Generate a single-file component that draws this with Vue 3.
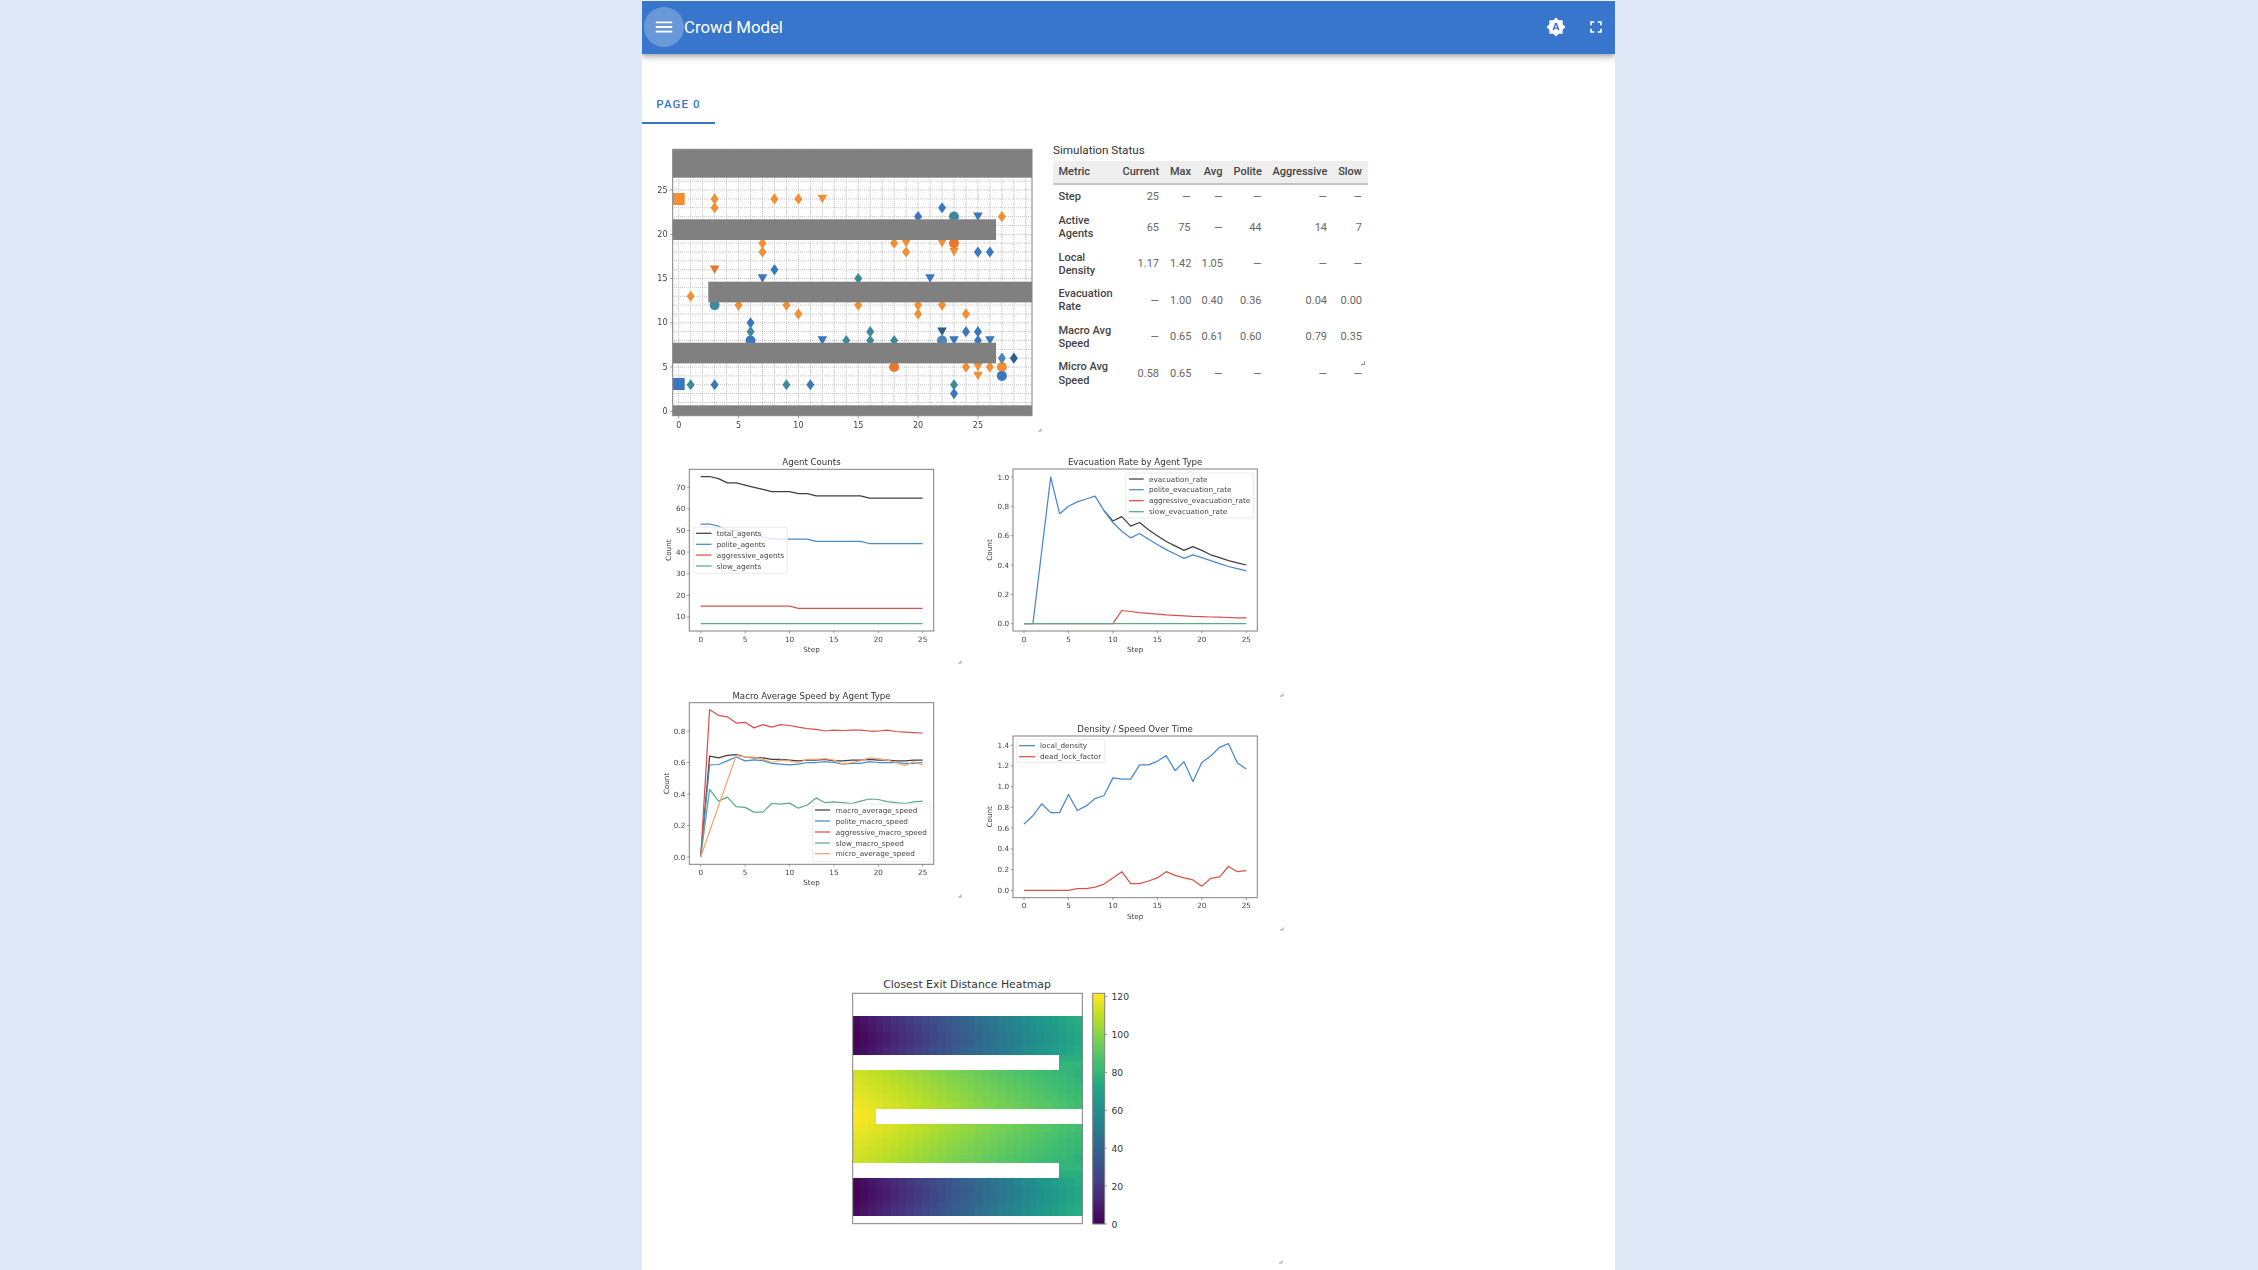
<script setup>
const K = '#404040', B = '#4a88cc', R = '#d8524a', G = '#5cab87', O = '#f4a571'

function line(c, ys, color, xs) {
  const pts = ys.map((y, i) => `${(c.x0 + c.dx * (xs ? xs[i] : i)).toFixed(1)},${(c.y0 - c.dy * y).toFixed(1)}`)
  return { d: 'M' + pts.join('L'), color }
}

function makeChart(c) {
  const xt = [0, 5, 10, 15, 20, 25].map(v => ({ v, x: c.x0 + c.dx * v }))
  const yt = c.yticks.map(v => ({ label: c.dec ? v.toFixed(1) : String(v), y: c.y0 - c.dy * v }))
  const lines = c.series.map(s => line(c, s.y, s.color, s.x))
  const leg = c.legend
  const rows = leg.rows.map((r, i) => ({ ...r, y: leg.ys[i] }))
  return { ...c, xt, yt, lines, rows, viewBox: c.vb.join(' '), w: c.vb[2], h: c.vb[3], cx: (c.l + c.r) / 2, cy: (c.t + c.b) / 2 }
}

const a = makeChart({
  key: 'a', vb: [650, 450, 316, 216], title: 'Agent Counts', titleY: 462,
  l: 689.3, r: 933.7, t: 469.3, b: 631, x0: 700.7, dx: 8.88, y0: 638.6, dy: 2.162,
  yticks: [10, 20, 30, 40, 50, 60, 70], yLabelX: 668.3, handle: [960, 663],
  series: [
    { color: K, y: [75,75,74,72,72,71,70,69,68,68,68,67,67,66,66,66,66,66,66,65,65,65,65,65,65,65] },
    { color: B, y: [53,53,52,50,50,49,48,47,46,46,46,46,46,45,45,45,45,45,45,44,44,44,44,44,44,44] },
    { color: R, y: [15,15,15,15,15,15,15,15,15,15,15,14,14,14,14,14,14,14,14,14,14,14,14,14,14,14] },
    { color: G, y: Array(26).fill(7) },
  ],
  legend: { x: 693.7, y: 527.3, w: 93.6, h: 46, lx: 696, lw: 15.5, tx: 716.7, ys: [533.3, 544.3, 555, 566],
    rows: [{ t: 'total_agents', c: K }, { t: 'polite_agents', c: B }, { t: 'aggressive_agents', c: R }, { t: 'slow_agents', c: G }] },
})

const c = makeChart({
  key: 'c', vb: [650, 680, 316, 220], title: 'Macro Average Speed by Agent Type', titleY: 695.7,
  l: 689.3, r: 933.7, t: 702.7, b: 864.3, x0: 700.7, dx: 8.88, y0: 857, dy: 157.5,
  yticks: [0, .2, .4, .6, .8], dec: true, yLabelX: 666, handle: [960, 897],
  series: [
    { color: K, y: [0,.64,.63,.645,.65,.635,.63,.63,.62,.62,.615,.61,.615,.615,.62,.61,.61,.615,.615,.62,.615,.615,.61,.61,.615,.615] },
    { color: B, y: [0,.585,.587,.61,.635,.61,.617,.612,.595,.59,.585,.59,.6,.6,.605,.6,.59,.595,.595,.605,.6,.6,.6,.595,.595,.6] },
    { color: R, y: [0,.935,.9,.89,.85,.855,.82,.84,.825,.84,.835,.825,.815,.81,.8,.805,.803,.805,.805,.8,.8,.805,.797,.793,.79,.787] },
    { color: G, y: [0,.43,.355,.38,.32,.315,.285,.285,.34,.335,.342,.31,.33,.375,.345,.35,.345,.34,.355,.368,.365,.352,.345,.34,.35,.355] },
    { color: O, x: [0,4,5,6,7,8,9,10,11,12,13,14,15,16,17,18,19,20,21,22,23,24,25],
      y: [0,.645,.635,.635,.62,.6,.615,.61,.6,.62,.62,.625,.615,.59,.6,.61,.63,.625,.615,.6,.58,.605,.585] },
  ],
  legend: { x: 812.3, y: 804, w: 118.4, h: 57.7, lx: 815, lw: 15, tx: 835.7, ys: [810, 821, 832, 843, 853.7],
    rows: [{ t: 'macro_average_speed', c: K }, { t: 'polite_macro_speed', c: B }, { t: 'aggressive_macro_speed', c: R }, { t: 'slow_macro_speed', c: G }, { t: 'micro_average_speed', c: O }] },
})

const b = makeChart({
  key: 'b', vb: [975, 450, 310, 250], title: 'Evacuation Rate by Agent Type', titleY: 462,
  l: 1013, r: 1257.3, t: 469, b: 631, x0: 1024, dx: 8.89, y0: 623.7, dy: 146.7,
  yticks: [0, .2, .4, .6, .8, 1], dec: true, yLabelX: 989.3, handle: [1282, 696],
  series: [
    { color: K, x: [9,10,11,12,13,14,15,16,17,18,19,20,21,22,23,24,25],
      y: [.77,.7,.73,.665,.69,.64,.6,.56,.53,.5,.525,.5,.47,.45,.43,.415,.4] },
    { color: B, x: [0,1,3,4,5,6,7,8,9,10,11,12,13,14,15,16,17,18,19,20,21,22,23,24,25],
      y: [0,0,1,.75,.8,.83,.85,.87,.77,.69,.63,.585,.615,.575,.54,.505,.475,.445,.47,.45,.43,.41,.39,.375,.36] },
    { color: R, y: [0,0,0,0,0,0,0,0,0,0,0,.09,.083,.075,.07,.065,.06,.057,.053,.05,.048,.046,.044,.042,.04,.04] },
    { color: G, y: Array(26).fill(0) },
  ],
  legend: { x: 1125.7, y: 473, w: 127.6, h: 45, lx: 1129, lw: 14.7, tx: 1149, ys: [479, 489.7, 500.7, 511.7],
    rows: [{ t: 'evacuation_rate', c: K }, { t: 'polite_evacuation_rate', c: B }, { t: 'aggressive_evacuation_rate', c: R }, { t: 'slow_evacuation_rate', c: G }] },
})

const d = makeChart({
  key: 'd', vb: [975, 710, 310, 225], title: 'Density / Speed Over Time', titleY: 729,
  l: 1013, r: 1257.3, t: 736, b: 897.7, x0: 1024, dx: 8.89, y0: 890.3, dy: 103.6,
  yticks: [0, .2, .4, .6, .8, 1, 1.2, 1.4], dec: true, yLabelX: 989.3, handle: [1282, 930],
  series: [
    { color: B, y: [.64,.72,.835,.75,.75,.925,.77,.815,.885,.915,1.085,1.073,1.073,1.21,1.21,1.245,1.3,1.155,1.24,1.05,1.235,1.295,1.38,1.415,1.23,1.17] },
    { color: R, y: [0,0,0,0,0,0,.015,.015,.03,.06,.12,.18,.065,.065,.09,.12,.18,.145,.12,.1,.04,.115,.13,.23,.18,.19] },
  ],
  legend: { x: 1016.7, y: 739.3, w: 88, h: 23, lx: 1019, lw: 16, tx: 1040, ys: [745.7, 756.7],
    rows: [{ t: 'local_density', c: B }, { t: 'dead_lock_factor', c: R }] },
})

const columns = [[a, c], [b, d]]

/* Floor-plan scatter */
const gx = v => 678.7 + 11.97 * v
const gy = v => 411.3 - 8.85 * v
const ORG = '#f28e35', BLU = '#3b77bd', TEA = '#3f8a9a', DRK = '#2c5f8a', LBL = '#4b86b8'
const raw = [
  ['d',3,24,ORG],['d',3,23,ORG],['d',8,24,ORG],['d',10,24,ORG],['v',12,24,ORG],['d',27,22,ORG],
  ['d',7,19,ORG],['d',7,18,ORG],['d',18,19,ORG],['v',19,19,ORG],['d',19,18,ORG],['v',22,19,ORG],['o',23,19,'#e8762c'],['v',23,18,ORG],
  ['v',3,16,'#e8762c'],['d',1,13,ORG],['d',5,12,ORG],['d',9,12,ORG],['d',10,11,ORG],['d',15,12,ORG],['d',20,12,ORG],['d',20,11,ORG],['d',22,12,ORG],['d',24,11,ORG],
  ['d',24,5,ORG],['v',25,5,ORG],['v',25,4,ORG],['d',26,5,ORG],['o',27,5,ORG],['o',18,5,'#e8762c'],
  ['d',1,3,TEA],['d',3,3,BLU],['d',9,3,TEA],['d',11,3,BLU],['d',23,3,TEA],['d',23,2,BLU],['o',27,4,BLU],['d',27,6,LBL],['d',28,6,DRK],
  ['d',6,10,BLU],['d',6,9,TEA],['o',6,8,BLU],['v',12,8,BLU],['d',14,8,TEA],['d',16,9,TEA],['d',16,8,TEA],['d',18,8,TEA],['v',22,9,DRK],['o',22,8,LBL],['v',23,8,BLU],
  ['d',24,9,BLU],['d',25,9,BLU],['d',25,8,BLU],['v',26,8,BLU],['o',3,12,TEA],['v',7,15,BLU],['d',8,16,BLU],['d',15,15,TEA],['v',21,15,BLU],
  ['d',25,18,BLU],['d',26,18,BLU],['d',20,22,BLU],['d',22,23,BLU],['o',23,22,TEA],['v',25,22,BLU],
]
const markers = raw.map(([k, x, y, color], i) => {
  const px = gx(x), py = gy(y)
  let pts = ''
  if (k === 'd') pts = `${px},${py - 5.6} ${px + 4},${py} ${px},${py + 5.6} ${px - 4},${py}`
  if (k === 'v') pts = `${px - 4.8},${py - 4.2} ${px + 4.8},${py - 4.2} ${px},${py + 4.4}`
  return { id: i, k, px, py, pts, color }
})
const gridX = Array.from({ length: 30 }, (_, i) => gx(i))
const gridY = Array.from({ length: 30 }, (_, i) => gy(i))
const gxt = [0, 5, 10, 15, 20, 25].map(v => ({ v, x: gx(v) }))
const gyt = [0, 5, 10, 15, 20, 25].map(v => ({ v, y: gy(v) }))
const walls = [
  [672.7, 149.3, 359.3, 28.4],
  [672.7, 219.3, 323.3, 20.7],
  [708.3, 281.7, 323.7, 20.7],
  [672.7, 342.7, 323.3, 20.7],
  [672.7, 405.3, 359.3, 10.4],
]

/* Heatmap */
const vir = ['#440154','#482475','#414487','#355f8d','#2a788e','#21918c','#22a884','#44bf70','#7ad151','#bddf26','#fde725']
function hex(h) { return [1, 3, 5].map(i => parseInt(h.slice(i, i + 2), 16)) }
function viridis(t) {
  const p = Math.max(0, Math.min(0.999, t)) * 10, i = Math.floor(p), f = p - i
  const A = hex(vir[i]), Z = hex(vir[i + 1])
  return `rgb(${A.map((v, j) => Math.round(v + (Z[j] - v) * f)).join(',')})`
}
function heatValue(col, r) {
  if (r < 3 || r > 28) return null
  if ((r === 8 || r === 9 || r === 22 || r === 23) && col < 27) return null
  if ((r === 15 || r === 16) && col >= 3) return null
  if (r <= 7) return 2.45 * col + 1.6 * Math.abs(r - 5.4)
  if (r >= 24) return 2.45 * col + 1.6 * Math.abs(r - 25.6)
  if (r === 8 || r === 9) return 72 + (r - 7) * 3
  if (r === 22 || r === 23) return 72 + (24 - r) * 3
  return 120 - 1.2 * col - 1.5 * Math.abs(r - 15.5)
}
const cells = []
const cw = 229.6 / 30, ch = 230.4 / 30
for (let r = 0; r < 30; r++) for (let col = 0; col < 30; col++) {
  const v = heatValue(col, r)
  if (v !== null) cells.push({ id: r * 30 + col, x: 852.7 + col * cw, y: 993.3 + r * ch, fill: viridis(v / 120) })
}
const gradStops = vir.map((color, i) => ({ offset: i * 10 + '%', color }))
const cbTicks = [0, 20, 40, 60, 80, 100, 120].map(v => ({ v, y: 1224 - v * 1.8942 }))
const cw1 = cw + 0.4, ch1 = ch + 0.4

/* Table */
const head = ['Metric', 'Current', 'Max', 'Avg', 'Polite', 'Aggressive', 'Slow']
const rows = [
  ['Step', '25', '—', '—', '—', '—', '—'],
  ['Active Agents', '65', '75', '—', '44', '14', '7'],
  ['Local Density', '1.17', '1.42', '1.05', '—', '—', '—'],
  ['Evacuation Rate', '—', '1.00', '0.40', '0.36', '0.04', '0.00'],
  ['Macro Avg Speed', '—', '0.65', '0.61', '0.60', '0.79', '0.35'],
  ['Micro Avg Speed', '0.58', '0.65', '—', '—', '—', '—'],
]
</script>

<template>
  <div class="page">
    <header class="bar">
      <button class="menu" aria-label="menu">
        <svg viewBox="0 0 24 24" width="22" height="22"><path fill="#fff" d="M3,6H21V8H3V6M3,11H21V13H3V11M3,16H21V18H3V16Z" /></svg>
      </button>
      <div class="title">Crowd Model</div>
      <div class="spacer"></div>
      <svg class="bar-icon" viewBox="0 0 24 24" width="20" height="20"><path fill="#fff" d="M14.3,16L13.6,14H10.4L9.7,16H7.8L11,7H13L16.2,16H14.3M20,8.69V4H15.31L12,0.69L8.69,4H4V8.69L0.69,12L4,15.31V20H8.69L12,23.31L15.31,20H20V15.31L23.31,12L20,8.69M10.85,12.65H13.15L12,9L10.85,12.65Z" /></svg>
      <svg class="bar-icon second" viewBox="0 0 24 24" width="20" height="20"><path fill="#fff" d="M5,5H10V7H7V10H5V5M14,5H19V10H17V7H14V5M17,14H19V19H14V17H17V14M10,17V19H5V14H7V17H10Z" /></svg>
    </header>

    <nav class="tabs"><div class="tab">PAGE 0</div></nav>

    <main class="content">
      <section class="top-row">
        <svg class="plot" viewBox="650 140 394 294" width="394" height="294">
          <clipPath id="floor"><rect x="672.7" y="149.3" width="359.3" height="266.4" /></clipPath>
          <g clip-path="url(#floor)">
            <line v-for="x in gridX" :key="'gx' + x" :x1="x" :x2="x" y1="149" y2="416" class="dot" />
            <line v-for="y in gridY" :key="'gy' + y" x1="672" x2="1032" :y1="y" :y2="y" class="dot" />
            <rect x="672.7" y="193" width="12" height="12" fill="#f28e35" />
            <rect x="672.7" y="378" width="12" height="12" fill="#3b77bd" />
            <template v-for="m in markers" :key="m.id">
              <circle v-if="m.k === 'o'" :cx="m.px" :cy="m.py" r="5" :fill="m.color" />
              <polygon v-else :points="m.pts" :fill="m.color" />
            </template>
            <rect v-for="w in walls" :key="w[1]" :x="w[0]" :y="w[1]" :width="w[2]" :height="w[3]" fill="#808080" />
          </g>
          <rect x="672.7" y="149.3" width="359.3" height="266.4" class="spine" />
          <g v-for="t in gxt" :key="'tx' + t.v">
            <line :x1="t.x" :x2="t.x" y1="415.7" y2="418.5" class="tick" />
            <text :x="t.x" y="425" class="mpl big" text-anchor="middle" dominant-baseline="central">{{ t.v }}</text>
          </g>
          <g v-for="t in gyt" :key="'ty' + t.v">
            <line x1="670" x2="672.7" :y1="t.y" :y2="t.y" class="tick" />
            <text x="667.5" :y="t.y" class="mpl big" text-anchor="end" dominant-baseline="central">{{ t.v }}</text>
          </g>
          <path d="M1041 428.5V431H1038" class="grip" />
        </svg>

        <div class="status">
          <div class="status-title">Simulation Status</div>
          <table class="metrics">
            <thead>
              <tr><th v-for="h in head" :key="h">{{ h }}</th></tr>
            </thead>
            <tbody>
              <tr v-for="r in rows" :key="r[0]">
                <td v-for="(v, i) in r" :key="i">{{ v }}</td>
              </tr>
            </tbody>
          </table>
          <span class="table-grip"></span>
        </div>
      </section>

      <section class="chart-columns">
        <div v-for="(col, ci) in columns" :key="ci" class="chart-col" :class="'col' + ci">
          <svg v-for="ch in col" :key="ch.key" class="plot" :viewBox="ch.viewBox" :width="ch.w" :height="ch.h">
            <text :x="ch.cx" :y="ch.titleY" class="mpl title-t" text-anchor="middle" dominant-baseline="central">{{ ch.title }}</text>
            <path v-for="(l, i) in ch.lines" :key="i" :d="l.d" :stroke="l.color" class="series" />
            <rect :x="ch.l" :y="ch.t" :width="ch.r - ch.l" :height="ch.b - ch.t" class="spine" />
            <g v-for="t in ch.xt" :key="'x' + t.v">
              <line :x1="t.x" :x2="t.x" :y1="ch.b" :y2="ch.b + 2.4" class="tick" />
              <text :x="t.x" :y="ch.b + 8" class="mpl" text-anchor="middle" dominant-baseline="central">{{ t.v }}</text>
            </g>
            <g v-for="t in ch.yt" :key="'y' + t.label">
              <line :x1="ch.l - 2.4" :x2="ch.l" :y1="t.y" :y2="t.y" class="tick" />
              <text :x="ch.l - 4" :y="t.y" class="mpl" text-anchor="end" dominant-baseline="central">{{ t.label }}</text>
            </g>
            <text :x="ch.cx" :y="ch.b + 18.5" class="mpl" text-anchor="middle" dominant-baseline="central">Step</text>
            <text :x="ch.yLabelX" :y="ch.cy" class="mpl" text-anchor="middle" dominant-baseline="central" :transform="`rotate(-90 ${ch.yLabelX} ${ch.cy})`">Count</text>
            <rect :x="ch.legend.x" :y="ch.legend.y" :width="ch.legend.w" :height="ch.legend.h" rx="1.5" class="legend" />
            <g v-for="r in ch.rows" :key="r.t">
              <line :x1="ch.legend.lx" :x2="ch.legend.lx + ch.legend.lw" :y1="r.y" :y2="r.y" :stroke="r.c" class="series" />
              <text :x="ch.legend.tx" :y="r.y" class="mpl" dominant-baseline="central">{{ r.t }}</text>
            </g>
            <path :d="`M${ch.handle[0] + 1} ${ch.handle[1] - 2.5}V${ch.handle[1]}H${ch.handle[0] - 2}`" class="grip" />
          </svg>
        </div>
      </section>

      <section class="heat-row">
        <svg class="plot heat" viewBox="650 960 635 310" width="635" height="310">
          <defs>
            <linearGradient id="vir" x1="0" y1="1" x2="0" y2="0">
              <stop v-for="s in gradStops" :key="s.offset" :offset="s.offset" :stop-color="s.color" />
            </linearGradient>
          </defs>
          <text x="967" y="984" class="mpl heat-title" text-anchor="middle" dominant-baseline="central">Closest Exit Distance Heatmap</text>
          <rect v-for="cell in cells" :key="cell.id" :x="cell.x" :y="cell.y" :width="cw1" :height="ch1" :fill="cell.fill" shape-rendering="crispEdges" />
          <rect x="852.7" y="993.3" width="229.6" height="230.4" class="spine" />
          <rect x="1092.7" y="993.3" width="12" height="230.7" fill="url(#vir)" class="spine-fill" />
          <g v-for="t in cbTicks" :key="t.v">
            <line x1="1104.7" x2="1107.2" :y1="t.y" :y2="t.y" class="tick" />
            <text x="1111.5" :y="t.y" class="mpl heat-tick" dominant-baseline="central">{{ t.v }}</text>
          </g>
          <path d="M1282 1260.5V1263H1279" class="grip" />
        </svg>
      </section>
    </main>
  </div>
</template>

<style>
html, body { margin: 0; height: 100%; overflow: hidden; background: #dfe8f6; }
</style>

<style scoped>
.page {
  margin-left: 642px;
  width: 973px;
  height: 1270px;
  padding-top: 1px;
  box-sizing: border-box;
  background: #fff;
  font-family: Roboto, "Liberation Sans", sans-serif;
  overflow: hidden;
}
.bar {
  height: 53px;
  display: flex;
  align-items: center;
  background: #3776cc;
  color: #fff;
  box-shadow: 0 2px 4px -1px rgba(0,0,0,.2), 0 4px 5px 0 rgba(0,0,0,.14), 0 1px 10px 0 rgba(0,0,0,.12);
  position: relative;
}
.menu {
  width: 40px;
  height: 40px;
  margin-left: 2px;
  margin-top: -1px;
  border: 0;
  padding: 0;
  border-radius: 50%;
  background: rgba(255,255,255,.25);
  display: flex;
  align-items: center;
  justify-content: center;
}
.title { font-size: 16.8px; line-height: 24px; margin-top: -2px; }
.spacer { flex: 1; }
.bar-icon.second { margin-left: 20px; margin-right: 9px; }
.bar-icon { margin-top: -2px; }
.tabs { margin-top: 30px; height: 40px; }
.tab {
  width: 73px;
  height: 40px;
  box-sizing: border-box;
  border-bottom: 2px solid #3776cc;
  color: #3776cc;
  font-size: 11.5px;
  font-weight: 500;
  letter-spacing: 1.1px;
  text-align: center;
  line-height: 40px;
}
.content { padding: 16px 0 0 8px; }
.top-row { display: flex; gap: 9px; }
.plot { display: block; filter: blur(.35px); }
.heat { filter: none; }
.status { position: relative; padding-top: 2px; width: 316px; height: 292px; }
.status-title { font-size: 11.7px; line-height: 16px; color: #333; }
.metrics {
  margin-top: 3px;
  border-collapse: collapse;
  table-layout: fixed;
  width: 314.5px;
  font-size: 11px;
  line-height: 13.3px;
  color: #666;
}
.metrics th {
  height: 23px;
  padding: 0 5.5px;
  background: #eeeeee;
  border-bottom: 2px solid #c4c4c4;
  color: #444;
  font-weight: 500;
  text-align: right;
  box-sizing: border-box;
}
.metrics th:nth-child(1) { width: 64px; text-align: left; }
.metrics th:nth-child(2) { width: 47.5px; }
.metrics th:nth-child(3) { width: 31.5px; }
.metrics th:nth-child(4) { width: 32px; }
.metrics th:nth-child(5) { width: 39px; }
.metrics th:nth-child(6) { width: 65.5px; }
.metrics th:nth-child(7) { width: 35px; }
.metrics td { padding: 5px 5.5px; text-align: right; }
.metrics td:first-child { text-align: left; font-weight: 500; color: #444; }
.metrics tbody tr:first-child td { height: 25px; box-sizing: border-box; }
.table-grip {
  position: absolute;
  left: 308px;
  top: 221px;
  width: 3px;
  height: 3px;
  border-right: 1px solid #999;
  border-bottom: 1px solid #999;
}
.chart-columns { display: flex; gap: 9px; margin-top: 16px; }
.chart-col { display: flex; flex-direction: column; }
.col0 { gap: 14px; }
.col1 { gap: 10px; }
.heat-row { margin-top: 25px; }
.mpl { font-family: "DejaVu Sans", sans-serif; font-size: 7.25px; fill: #444; }
.big { font-size: 8px; }
.title-t { font-size: 8.65px; fill: #333; }
.heat-title { font-size: 10.85px; fill: #333; }
.heat-tick { font-size: 9.2px; fill: #333; }
.series { fill: none; stroke-width: 1.25; stroke-linejoin: round; }
.spine { fill: none; stroke: #808080; stroke-width: 1; }
.spine-fill { stroke: #808080; stroke-width: 1; }
.tick { stroke: #666; stroke-width: .6; }
.dot { stroke: #aaa; stroke-width: .7; stroke-dasharray: 1 1; }
.legend { fill: #fff; fill-opacity: .8; stroke: #ddd; stroke-width: .6; }
.grip { fill: none; stroke: #999; stroke-width: 1; }
</style>
